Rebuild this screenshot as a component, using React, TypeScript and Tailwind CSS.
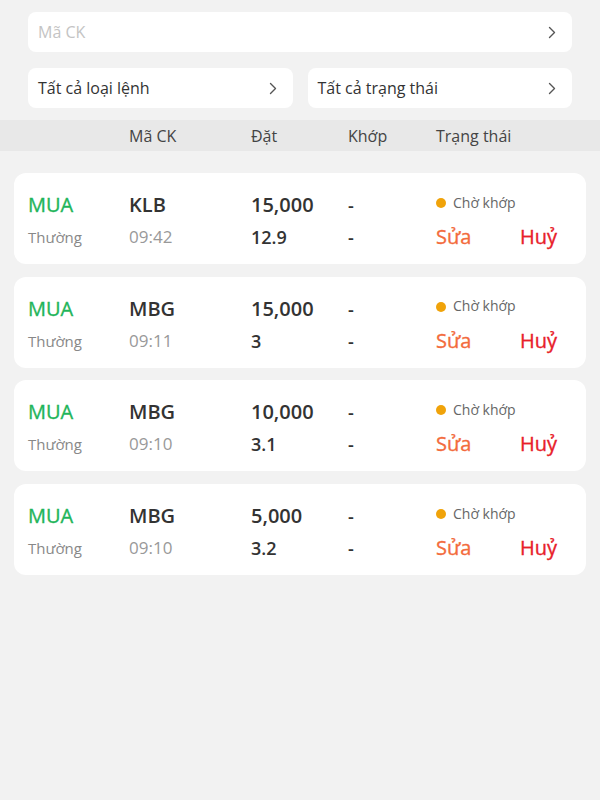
import React from "react";

const orders = [
  { side: "MUA", type: "Thường", code: "KLB", time: "09:42", qty: "15,000", price: "12.9" },
  { side: "MUA", type: "Thường", code: "MBG", time: "09:11", qty: "15,000", price: "3" },
  { side: "MUA", type: "Thường", code: "MBG", time: "09:10", qty: "10,000", price: "3.1" },
  { side: "MUA", type: "Thường", code: "MBG", time: "09:10", qty: "5,000", price: "3.2" },
];

function Chevron() {
  return (
    <svg width="8" height="13" viewBox="0 0 8 13" fill="none">
      <polyline points="1.5,1.5 6.5,6.5 1.5,11.5" stroke="#555" strokeWidth="1.4" strokeLinecap="round" strokeLinejoin="round" />
    </svg>
  );
}

export default function App() {
  return (
    <div
      className="w-full h-[800px] bg-[#f2f2f2] text-[#333]"
      style={{ fontFamily: '"Open Sans", "Noto Sans", sans-serif' }}
    >
      <div className="px-[28px] pt-[12px]">
        <div className="h-[40px] rounded-[8px] bg-white flex items-center justify-between pl-[10px] pr-[16px]">
          <span className="text-[16px] text-[#c4c4c4]">Mã CK</span>
          <Chevron />
        </div>
        <div className="mt-[16px] flex gap-[15px]">
          <div className="flex-1 h-[40px] rounded-[8px] bg-white flex items-center justify-between pl-[10px] pr-[16px]">
            <span className="text-[16px] text-[#333]">Tất cả loại lệnh</span>
            <Chevron />
          </div>
          <div className="flex-1 h-[40px] rounded-[8px] bg-white flex items-center justify-between pl-[10px] pr-[16px]">
            <span className="text-[16px] text-[#333]">Tất cả trạng thái</span>
            <Chevron />
          </div>
        </div>
      </div>

      <div className="mt-[12px] h-[31px] bg-[#e8e8e8] pl-[28px] grid grid-cols-[101px_122px_97px_88px_1fr] items-center text-[16px] text-[#444]">
        <span></span>
        <span>Mã CK</span>
        <span>Đặt</span>
        <span>Khớp</span>
        <span>Trạng thái</span>
      </div>

      <div className="px-[14px] pt-[22px] flex flex-col gap-[12.7px]">
        {orders.map((o, i) => (
          <div key={i} className="h-[91px] rounded-[12px] bg-white pl-[14px] pt-[20px] grid grid-cols-[101px_122px_97px_88px_1fr] grid-rows-[24px_24px] gap-y-[8px]">
            <span className="text-[20px] leading-[24px] text-[#1fb55a] [-webkit-text-stroke:0.35px_#1fb55a]">{o.side}</span>
            <span className="text-[20px] leading-[24px] font-semibold text-[#333]">{o.code}</span>
            <span className="text-[20px] leading-[24px] font-semibold text-[#333]">{o.qty}</span>
            <span className="text-[18px] leading-[24px] font-semibold text-[#333]">-</span>
            <span className="flex items-center gap-[7px] -mt-[6px]">
              <span className="w-[10px] h-[10px] rounded-full bg-[#f0a30a] mt-[2px]"></span>
              <span className="text-[14px] text-[#666]">Chờ khớp</span>
            </span>

            <span className="text-[15px] leading-[24px] text-[#888]">{o.type}</span>
            <span className="text-[17px] leading-[24px] text-[#999]">{o.time}</span>
            <span className="text-[18px] leading-[24px] font-semibold text-[#333]">{o.price}</span>
            <span className="text-[18px] leading-[24px] font-semibold text-[#333]">-</span>
            <span className="flex items-center">
              <span className="w-[84px] text-[20px] leading-[24px] text-[#f36b3c] [-webkit-text-stroke:0.35px_#f36b3c]">Sửa</span>
              <span className="text-[20px] leading-[24px] text-[#e8202a] [-webkit-text-stroke:0.35px_#e8202a]">Huỷ</span>
            </span>
          </div>
        ))}
      </div>
    </div>
  );
}
